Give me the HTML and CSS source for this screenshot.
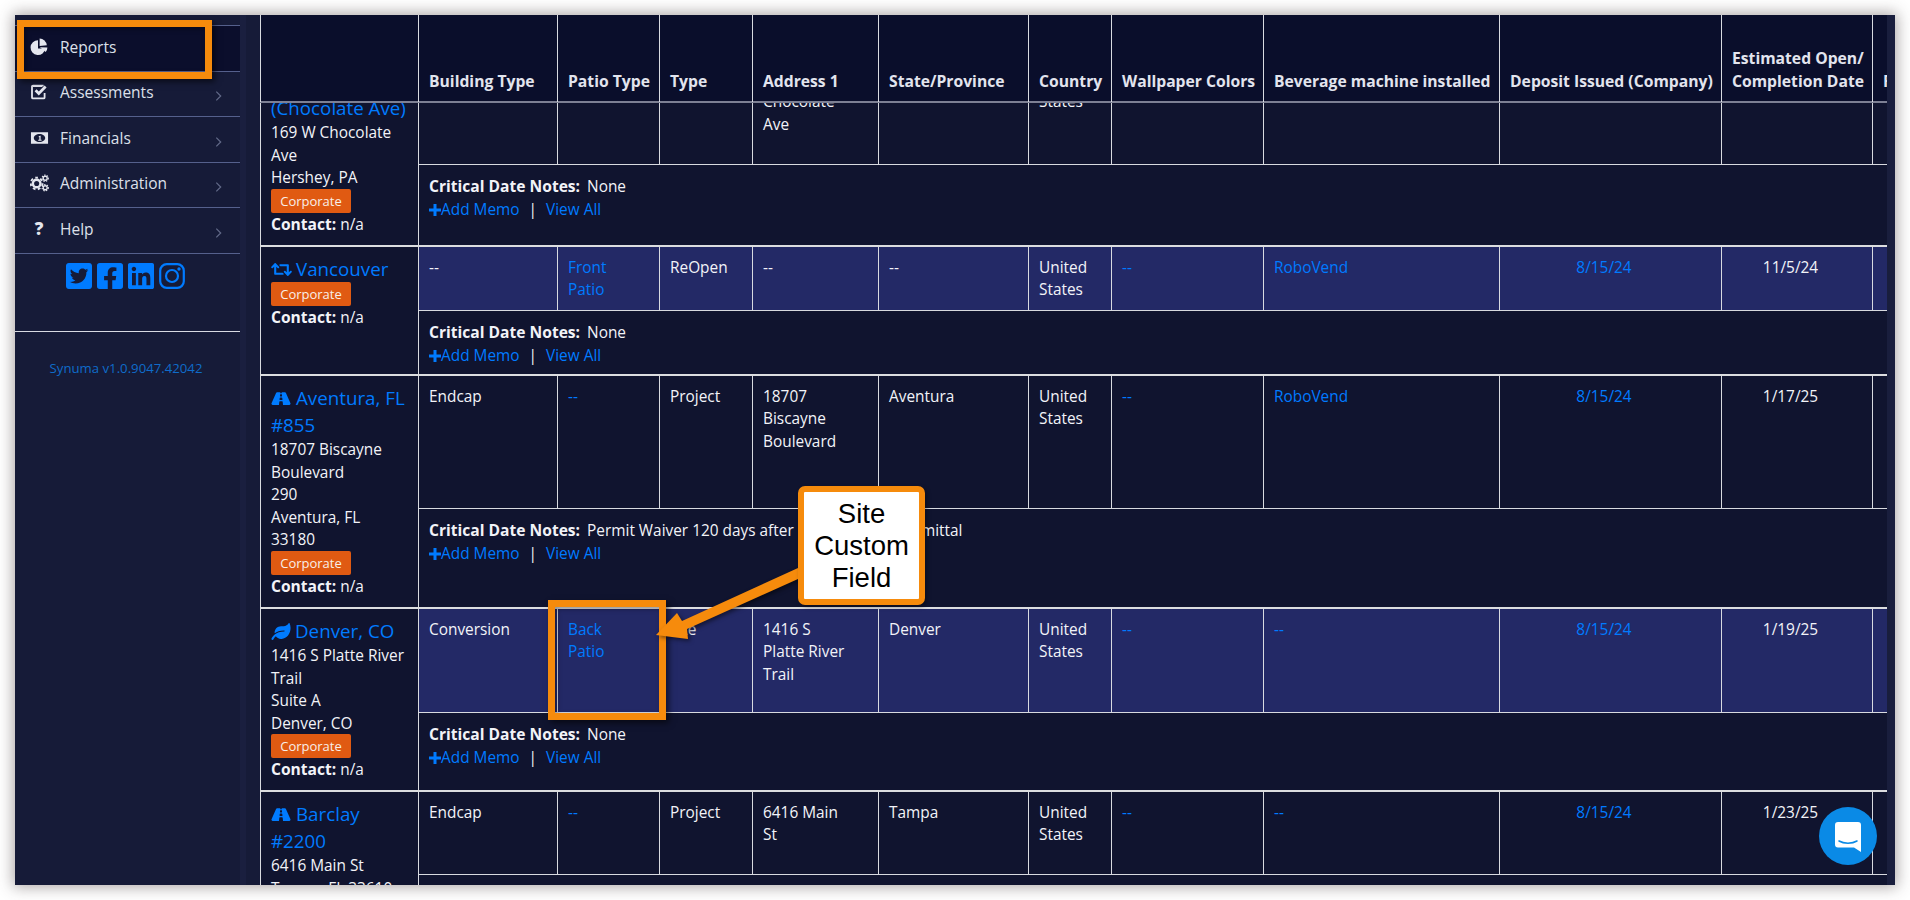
FILE: index.html
```html
<!DOCTYPE html>
<html lang="en">
<head>
<meta charset="utf-8">
<title>Synuma Reports</title>
<link rel="stylesheet" href="styles.css">
</head>
<body>
<div class="window">
  <aside class="sidebar">
    <nav class="nav">
      <a class="nav-item active"><svg class="nav-icon" viewBox="0 0 18 18"><path d="M8 2.2a7.4 7.4 0 1 0 7.3 8.4H8z"/><path d="M9.6 .6a7.6 7.6 0 0 1 7.2 6.6l-7.2 .9z"/><path d="M9.9 9.3l7.5 .1a7.6 7.6 0 0 1-1.7 4.6z"/></svg><span>Reports</span></a>
      <a class="nav-item"><svg class="nav-icon" viewBox="0 0 18 18"><path d="M14.6 10v4.4a1 1 0 0 1-1 1H3a1 1 0 0 1-1-1V3.6a1 1 0 0 1 1-1h10.6" fill="none" stroke="currentColor" stroke-width="1.8"/><path d="M3 2h9v2H3z"/><path d="M4.6 8.2l2-2 2.2 2.3L14.600 2.600l2 2-7.800 7.800z"/></svg><span>Assessments</span><svg class="chev" viewBox="0 0 8 12"><path d="M1.500 1l5 5-5 5"/></svg></a>
      <a class="nav-item"><svg class="nav-icon wide" viewBox="0 0 20 14"><path fill-rule="evenodd" d="M1 1h18v12H1zM10 2.800c-3.300 0-6 1.900-6 4.200s2.700 4.200 6 4.200 6-1.900 6-4.200-2.700-4.200-6-4.200z"/><path d="M9.200 5.200l1.400-.6h.6v4.200h1v1H8.600v-1h1.200V5.900l-.6.200z"/></svg><span>Financials</span><svg class="chev" viewBox="0 0 8 12"><path d="M1.500 1l5 5-5 5"/></svg></a>
      <a class="nav-item"><svg class="nav-icon wide" viewBox="0 0 20 18"><circle cx="7" cy="9.500" r="4" fill="none" stroke="currentColor" stroke-width="2.600"/><circle cx="7" cy="9.500" r="6.200" fill="none" stroke="currentColor" stroke-width="2" stroke-dasharray="2.800 2.600"/><circle cx="16" cy="4" r="2.100" fill="none" stroke="currentColor" stroke-width="1.400"/><circle cx="16" cy="4" r="3.300" fill="none" stroke="currentColor" stroke-width="1.200" stroke-dasharray="1.500 1.300"/><circle cx="16" cy="14" r="2.100" fill="none" stroke="currentColor" stroke-width="1.400"/><circle cx="16" cy="14" r="3.300" fill="none" stroke="currentColor" stroke-width="1.200" stroke-dasharray="1.500 1.300"/></svg><span>Administration</span><svg class="chev" viewBox="0 0 8 12"><path d="M1.500 1l5 5-5 5"/></svg></a>
      <a class="nav-item"><b class="nav-icon help">?</b><span>Help</span><svg class="chev" viewBox="0 0 8 12"><path d="M1.500 1l5 5-5 5"/></svg></a>
    </nav>
    <div class="social">
      <svg viewBox="0 32 448 448"><path d="M400 32H48C21.500 32 0 53.500 0 80v352c0 26.500 21.500 48 48 48h352c26.500 0 48-21.500 48-48V80c0-26.500-21.500-48-48-48zm-48.900 158.800c.2 2.800.2 5.700.2 8.500 0 86.700-66 186.600-186.600 186.600-37.200 0-71.700-10.800-100.700-29.400 5.300.6 10.400.8 15.800.8 30.700 0 58.900-10.400 81.400-28-28.800-.6-53-19.500-61.300-45.500 10.100 1.500 19.200 1.500 29.600-1.200-30-6.100-52.500-32.500-52.500-64.400v-.8c8.700 4.900 18.900 7.900 29.600 8.300a65.447 65.447 0 0 1-29.200-54.600c0-12.200 3.200-23.400 8.900-33.100 32.300 39.800 80.800 65.800 135.200 68.600-9.300-44.500 24-80.600 64-80.600 18.900 0 35.900 7.900 47.900 20.700 14.800-2.800 29-8.300 41.600-15.800-4.900 15.200-15.100 28-29.600 36.300 13.200-1.400 26-5.100 37.800-10.200-8.900 13.100-20.100 24.700-32.900 34z"/></svg>
      <svg viewBox="0 32 448 448"><path d="M400 32H48A48 48 0 0 0 0 80v352a48 48 0 0 0 48 48h137.250V327.690h-63V256h63v-54.640c0-62.150 37-96.480 93.670-96.480 27.140 0 55.520 4.840 55.520 4.840v61h-31.270c-30.810 0-40.420 19.120-40.420 38.730V256h68.780l-11 71.690h-57.780V480H400a48 48 0 0 0 48-48V80a48 48 0 0 0-48-48z"/></svg>
      <svg viewBox="0 32 448 448"><path d="M416 32H31.900C14.300 32 0 46.500 0 64.300v383.400C0 465.500 14.300 480 31.900 480H416c17.600 0 32-14.500 32-32.300V64.300c0-17.800-14.400-32.300-32-32.300zM135.400 416H69V202.200h66.500V416zm-33.200-243c-21.300 0-38.500-17.300-38.500-38.500S80.900 96 102.200 96c21.200 0 38.500 17.300 38.500 38.500 0 21.300-17.200 38.500-38.500 38.500zm282.100 243h-66.400V312c0-24.800-.5-56.700-34.500-56.700-34.600 0-39.900 27-39.900 54.900V416h-66.400V202.200h63.700v29.200h.9c8.900-16.800 30.600-34.500 62.900-34.500 67.200 0 79.700 44.300 79.700 101.900V416z"/></svg>
      <svg class="ig" viewBox="0 0 26 26"><rect x="1.200" y="1.200" width="23.600" height="23.600" rx="6.500"/><circle cx="13" cy="13" r="6"/><circle class="dot" cx="20" cy="6" r="1.700"/></svg>
    </div>
    <div class="version">Synuma v1.0.9047.42042</div>
  </aside>
  <div class="strip"></div>
  <main class="main">
    <div class="thead">
      <div class="th"></div>
      <div class="th">Building Type</div>
      <div class="th">Patio Type</div>
      <div class="th">Type</div>
      <div class="th">Address 1</div>
      <div class="th">State/Province</div>
      <div class="th">Country</div>
      <div class="th">Wallpaper Colors</div>
      <div class="th">Beverage machine installed</div>
      <div class="th">Deposit Issued (Company)</div>
      <div class="th">Estimated Open/<br>Completion Date</div>
      <div class="th clip">Final</div>
    </div>
    <div class="tbody">
      <div class="scroller">

        <section class="group g1">
          <div class="site">
            <a class="site-name">Hershey<br>(Chocolate Ave)</a>
            <div class="addr">169 W Chocolate<br>Ave<br>Hershey, PA</div>
            <span class="badge">Corporate</span>
            <div><b>Contact:</b> n/a</div>
          </div>
          <div class="data">
            <div class="row">
              <div class="td">Endcap</div><div class="td"></div><div class="td"></div>
              <div class="td">169 W<br>Chocolate<br>Ave</div>
              <div class="td"></div><div class="td">United<br>States</div>
              <div class="td"></div><div class="td"></div><div class="td"></div><div class="td"></div><div class="td"></div>
            </div>
            <div class="notes">
              <div><b>Critical Date Notes:</b><span class="note-text">None</span></div>
              <div class="memo"><a><svg class="plus" viewBox="0 0 12 12"><path d="M4.500 0h3v4.500H12v3H7.500V12h-3V7.500H0v-3h4.500z"/></svg>Add Memo</a><span class="pipe">|</span><a>View All</a></div>
            </div>
          </div>
        </section>

        <section class="group g2 alt">
          <div class="site">
            <a class="site-name"><svg class="site-icon" viewBox="0 0 640 512"><path d="M629.657 343.598L528.971 444.284c-9.373 9.372-24.568 9.372-33.941 0L394.343 343.598c-9.373-9.373-9.373-24.569 0-33.941l10.823-10.823c9.562-9.562 25.133-9.340 34.419.492L480 342.118V160H292.451a24.005 24.005 0 0 1-16.971-7.029l-16-16C244.361 121.851 255.069 96 276.451 96H520c13.255 0 24 10.745 24 24v222.118l40.416-43.792c9.285-9.831 24.856-10.054 34.419-.492l10.823 10.823c9.372 9.372 9.372 24.568-.001 33.941zm-265.138 15.431A23.999 23.999 0 0 0 347.548 352H160V169.881l40.416 43.792c9.286 9.831 24.856 10.054 34.419.491l10.822-10.822c9.373-9.373 9.373-24.569 0-33.941L144.971 67.716c-9.373-9.373-24.569-9.373-33.941 0L10.343 168.402c-9.373 9.373-9.373 24.569 0 33.941l10.822 10.822c9.562 9.562 25.133 9.340 34.419-.491L96 169.881V392c0 13.255 10.745 24 24 24h243.549c21.382 0 32.090-25.851 16.971-40.971l-16.001-16z"/></svg>Vancouver</a>
            <span class="badge">Corporate</span>
            <div><b>Contact:</b> n/a</div>
          </div>
          <div class="data">
            <div class="row">
              <div class="td">--</div><div class="td"><a>Front<br>Patio</a></div><div class="td">ReOpen</div><div class="td">--</div><div class="td">--</div>
              <div class="td">United<br>States</div><div class="td"><a>--</a></div><div class="td"><a>RoboVend</a></div>
              <div class="td center"><a>8/15/24</a></div><div class="td center">11/5/24</div><div class="td"></div>
            </div>
            <div class="notes">
              <div><b>Critical Date Notes:</b><span class="note-text">None</span></div>
              <div class="memo"><a><svg class="plus" viewBox="0 0 12 12"><path d="M4.500 0h3v4.500H12v3H7.500V12h-3V7.500H0v-3h4.500z"/></svg>Add Memo</a><span class="pipe">|</span><a>View All</a></div>
            </div>
          </div>
        </section>

        <section class="group g3">
          <div class="site">
            <a class="site-name"><svg class="site-icon road" viewBox="0 0 576 512"><path d="M573.190 402.670l-139.790-320C428.430 71.290 417.600 64 405.680 64h-97.590l2.450 23.160c.5 4.720-3.210 8.840-7.960 8.840h-29.160c-4.750 0-8.460-4.120-7.960-8.840L267.910 64h-97.590c-11.930 0-22.760 7.290-27.730 18.670L2.800 402.670C-6.450 423.860 8.310 448 30.540 448h196.840l10.310-97.680c.86-8.140 7.720-14.320 15.910-14.320h68.800c8.190 0 15.050 6.180 15.910 14.320L348.620 448h196.840c22.230 0 36.990-24.140 27.730-45.330zM260.400 135.160a8 8 0 0 1 7.960-7.160h39.290c4.090 0 7.530 3.090 7.960 7.160l4.600 43.580c.75 7.090-4.810 13.260-11.930 13.260h-40.540c-7.130 0-12.680-6.170-11.930-13.260l4.590-43.580zM315.640 304h-55.290c-9.500 0-16.910-8.230-15.910-17.680l5.070-48c.86-8.140 7.720-14.320 15.910-14.320h45.150c8.190 0 15.050 6.180 15.910 14.320l5.070 48c1 9.450-6.410 17.680-15.910 17.680z"/></svg>Aventura, FL<br>#855</a>
            <div class="addr">18707 Biscayne<br>Boulevard<br>290<br>Aventura, FL<br>33180</div>
            <span class="badge">Corporate</span>
            <div><b>Contact:</b> n/a</div>
          </div>
          <div class="data">
            <div class="row">
              <div class="td">Endcap</div><div class="td"><a>--</a></div><div class="td">Project</div><div class="td">18707<br>Biscayne<br>Boulevard</div><div class="td">Aventura</div>
              <div class="td">United<br>States</div><div class="td"><a>--</a></div><div class="td"><a>RoboVend</a></div>
              <div class="td center"><a>8/15/24</a></div><div class="td center">1/17/25</div><div class="td"></div>
            </div>
            <div class="notes">
              <div><b>Critical Date Notes:</b><span class="note-text">Permit Waiver 120 days after building plan submittal</span></div>
              <div class="memo"><a><svg class="plus" viewBox="0 0 12 12"><path d="M4.500 0h3v4.500H12v3H7.500V12h-3V7.500H0v-3h4.500z"/></svg>Add Memo</a><span class="pipe">|</span><a>View All</a></div>
            </div>
          </div>
        </section>

        <section class="group g4 alt">
          <div class="site">
            <a class="site-name"><svg class="site-icon leaf" viewBox="0 0 576 512"><path d="M546.200 9.700c-5.600-12.500-21.600-13-28.300-1.200C486.900 62.400 431.400 96 368 96h-80C182 96 96 182 96 288c0 7 .8 13.700 1.500 20.500C161.300 262.800 253.400 224 384 224c8.800 0 16 7.200 16 16s-7.200 16-16 16C132.600 256 26 410.100 2.400 468c-6.600 16.300 1.200 34.900 17.500 41.600 16.400 6.800 35-1.100 41.800-17.300 1.500-3.600 20.900-47.900 71.900-90.600 32.400 43.900 94 85.800 174.900 77.200C465.500 467.500 576 326.700 576 154.300c0-50.200-10.800-102.200-29.800-144.600z"/></svg>Denver, CO</a>
            <div class="addr">1416 S Platte River<br>Trail<br>Suite A<br>Denver, CO</div>
            <span class="badge">Corporate</span>
            <div><b>Contact:</b> n/a</div>
          </div>
          <div class="data">
            <div class="row">
              <div class="td">Conversion</div><div class="td"><a>Back<br>Patio</a></div><div class="td">Site</div><div class="td">1416 S<br>Platte River<br>Trail</div><div class="td">Denver</div>
              <div class="td">United<br>States</div><div class="td"><a>--</a></div><div class="td"><a>--</a></div>
              <div class="td center"><a>8/15/24</a></div><div class="td center">1/19/25</div><div class="td"></div>
            </div>
            <div class="notes">
              <div><b>Critical Date Notes:</b><span class="note-text">None</span></div>
              <div class="memo"><a><svg class="plus" viewBox="0 0 12 12"><path d="M4.500 0h3v4.500H12v3H7.500V12h-3V7.500H0v-3h4.500z"/></svg>Add Memo</a><span class="pipe">|</span><a>View All</a></div>
            </div>
          </div>
        </section>

        <section class="group g5">
          <div class="site">
            <a class="site-name"><svg class="site-icon road" viewBox="0 0 576 512"><path d="M573.190 402.670l-139.790-320C428.430 71.290 417.600 64 405.680 64h-97.590l2.450 23.160c.5 4.720-3.210 8.840-7.960 8.840h-29.160c-4.750 0-8.460-4.120-7.960-8.840L267.910 64h-97.590c-11.930 0-22.760 7.290-27.730 18.670L2.800 402.670C-6.450 423.860 8.310 448 30.540 448h196.840l10.310-97.680c.86-8.140 7.720-14.320 15.910-14.320h68.800c8.190 0 15.050 6.180 15.910 14.320L348.620 448h196.840c22.230 0 36.990-24.140 27.730-45.330zM260.400 135.160a8 8 0 0 1 7.960-7.160h39.290c4.090 0 7.530 3.090 7.960 7.160l4.600 43.580c.75 7.090-4.810 13.260-11.930 13.260h-40.540c-7.130 0-12.680-6.170-11.930-13.260l4.590-43.580zM315.640 304h-55.290c-9.500 0-16.910-8.230-15.910-17.680l5.070-48c.86-8.140 7.720-14.320 15.910-14.320h45.150c8.190 0 15.050 6.180 15.910 14.320l5.070 48c1 9.450-6.410 17.680-15.910 17.680z"/></svg>Barclay<br>#2200</a>
            <div class="addr">6416 Main St<br>Tampa, FL 33610</div>
            <span class="badge">Corporate</span>
            <div><b>Contact:</b> n/a</div>
          </div>
          <div class="data">
            <div class="row">
              <div class="td">Endcap</div><div class="td"><a>--</a></div><div class="td">Project</div><div class="td">6416 Main<br>St</div><div class="td">Tampa</div>
              <div class="td">United<br>States</div><div class="td"><a>--</a></div><div class="td"><a>--</a></div>
              <div class="td center"><a>8/15/24</a></div><div class="td center">1/23/25</div><div class="td"></div>
            </div>
            <div class="notes"></div>
          </div>
        </section>

      </div>
    </div>
  </main>
  <div class="strip-right"></div>
</div>

<div class="mark mark-reports"></div>
<div class="mark mark-patio"></div>
<svg class="arrow" viewBox="0 0 150 80"><path d="M1 72L22 50 27 58 143 5V16L32 66 33 76z"/></svg>
<div class="callout">Site<br>Custom<br>Field</div>
<div class="chat"><svg viewBox="0 0 26 30"><path d="M3 0h20a3 3 0 0 1 3 3v27l-7-4.500H3a3 3 0 0 1-3-3V3a3 3 0 0 1 3-3z"/><path class="smile" d="M4 19c5 3 13 3 18 0"/></svg></div>
</body>
</html>
```

FILE: styles.css
```css
* { box-sizing: border-box; }
html, body { margin: 0; height: 900px; overflow: hidden; background: #fff; }
body {
  padding: 15px;
  position: relative;
  font: 15.4px/22.5px "Open Sans", "Noto Sans", sans-serif;
  color: #f2f3f8;
}
a { color: #007bff; text-decoration: none; }
b { font-weight: 700; font-size: 15.6px; }

.window {
  display: flex;
  height: 870px;
  background: #161b38;
  box-shadow: 0 0 14px 2px rgba(70, 60, 60, .45);
  overflow: hidden;
}

/* sidebar */
.sidebar { width: 225px; flex: none; padding-top: 10px; }
.nav-item {
  display: flex;
  align-items: center;
  height: 45.5px;
  padding: 0 18px 3px 15px;
  border-top: 1px solid #55608c;
  color: #dde0ea;
  font-size: 15.5px;
  position: relative;
}
.nav-item.active { background: #0b0e2c; }
.nav-icon { width: 18px; height: 18px; flex: none; margin-right: 12px; fill: currentColor; color: #e4e6ee; }
.nav-icon.wide { width: 19px; margin-right: 11px; }
.nav-icon.help { font: 800 17px/18px "Open Sans", sans-serif; text-align: center; }
.chev {
  width: 7px; height: 12px; margin-left: auto; margin-top: 8px;
  fill: none; stroke: #626a88; stroke-width: 1.4;
}
.social {
  display: flex;
  justify-content: center;
  gap: 5px;
  height: 79px;
  padding: 9px 4px 0 0;
  border-top: 1px solid #55608c;
  border-bottom: 1px solid #d8dae2;
}
.social svg { width: 26px; height: 26px; fill: #007bff; }
.social .ig { fill: none; stroke: #007bff; stroke-width: 2.2; }
.social .ig .dot { fill: #007bff; stroke: none; }
.version {
  margin-top: 25px;
  padding-right: 3px;
  text-align: center;
  font-size: 13.2px;
  line-height: 22px;
  color: #0f6cca;
}
.strip { width: 6px; flex: none; background: #1a1f3f; }
.strip-right { width: 8px; flex: none; background: #191e3d; }

/* table */
.main {
  --tracks: 158px 139px 102px 93px 126px 150px 83px 152px 236px 222px 151px 15px;
  flex: 1;
  min-width: 0;
  margin-left: 14px;
  display: flex;
  flex-direction: column;
  overflow: hidden;
}
.thead {
  display: grid;
  grid-template-columns: var(--tracks);
  height: 88px;
  flex: none;
  background: #0a0e2b;
  border-bottom: 2px solid #7d8094;
}
.th {
  display: flex;
  align-items: flex-end;
  padding: 0 4px 9px 10px;
  border-left: 1px solid #d8dae0;
  font-weight: 700;
  font-size: 15.7px;
  line-height: 23px;
  color: #e2e4ee;
  white-space: nowrap;
}
.th:first-child { padding: 0; }
.th:nth-child(11) { display: block; padding-top: 32px; }
.th.clip { overflow: hidden; }
.tbody { flex: 1; min-height: 0; overflow: hidden; }
.scroller { margin-top: -46px; }

.group {
  display: grid;
  grid-template-columns: 158px 1fr;
  border-top: 2px solid #dcdde0;
  background: #10142f;
}
.site {
  padding: 8px 0 0 10px;
  border-left: 1px solid #d8dae0;
  overflow: hidden;
  white-space: nowrap;
}
.site-name { display: block; font-size: 18.750px; line-height: 27px; }
.site-icon { width: 21px; height: 17px; margin-right: 4px; fill: currentColor; vertical-align: -2px; }
.site-icon.road { width: 20px; margin-right: 5px; }
.site-icon.leaf { width: 20px; margin-right: 4px; }
.addr { padding-top: 1px; margin-bottom: -1px; }
.badge {
  display: block;
  width: 80px;
  height: 24px;
  border-radius: 2px;
  background: #e05a12;
  color: #f8efe8;
  font-size: 13px;
  line-height: 24px;
  text-align: center;
}
.data { display: flex; flex-direction: column; min-width: 0; }
.row {
  display: grid;
  grid-template-columns: 139px 102px 93px 126px 150px 83px 152px 236px 222px 151px 15px;
  border-bottom: 1px solid #d8dae0;
  flex: none;
}
.alt .row { background: #232966; }
.td { padding: 9.500px 4px 0 10px; border-left: 1px solid #d8dae0; overflow: hidden; }
.td.center { text-align: center; padding-right: 23px; }
.notes {
  flex: 1;
  padding: 10px 10px 0;
  border-left: 1px solid #d8dae0;
}
.note-text { margin-left: 7px; }
.memo { display: flex; align-items: center; }
.plus { width: 12px; height: 12px; fill: currentColor; vertical-align: -1px; }
.pipe { margin: 0 9px; }

.g1 { height: 188px; }
.g1 .row { height: 106px; }
.g2 { height: 129px; }
.g2 .row { height: 64px; }
.g3 { height: 233px; }
.g3 .row { height: 133px; }
.g4 { height: 183px; }
.g4 .row { height: 104px; }
.g5 { height: 260px; }
.g5 .row { height: 83px; }

/* annotations */
.mark {
  position: absolute;
  border: 7px solid #f68b0c;
  box-shadow: 3px 3px 6px rgba(0, 0, 0, .55), inset 2px 2px 5px rgba(0, 0, 0, .35);
}
.mark-reports { left: 17px; top: 20px; width: 195px; height: 59px; }
.mark-patio { left: 548px; top: 600px; width: 118px; height: 120px; }
.arrow {
  position: absolute;
  left: 655px;
  top: 563px;
  width: 150px;
  height: 80px;
  fill: #f68b0c;
  filter: drop-shadow(2px 2px 2px rgba(0, 0, 0, .5));
}
.callout {
  position: absolute;
  left: 798px;
  top: 486px;
  width: 127px;
  height: 119px;
  padding-top: 6px;
  background: #fff;
  border: 6px solid #f68b0c;
  border-radius: 7px;
  color: #000;
  font: 27.500px/32px "Liberation Sans", Arial, sans-serif;
  text-align: center;
  box-shadow: 2px 2px 4px rgba(0, 0, 0, .35);
}
.chat {
  position: absolute;
  left: 1819px;
  top: 807px;
  width: 58px;
  height: 58px;
  border-radius: 50%;
  background: #0a8ae6;
  display: flex;
  align-items: center;
  justify-content: center;
}
.chat svg { width: 26px; height: 30px; fill: #fff; margin-top: 1px; }
.chat .smile { fill: none; stroke: #0a8ae6; stroke-width: 1.500; stroke-linecap: round; }
```
